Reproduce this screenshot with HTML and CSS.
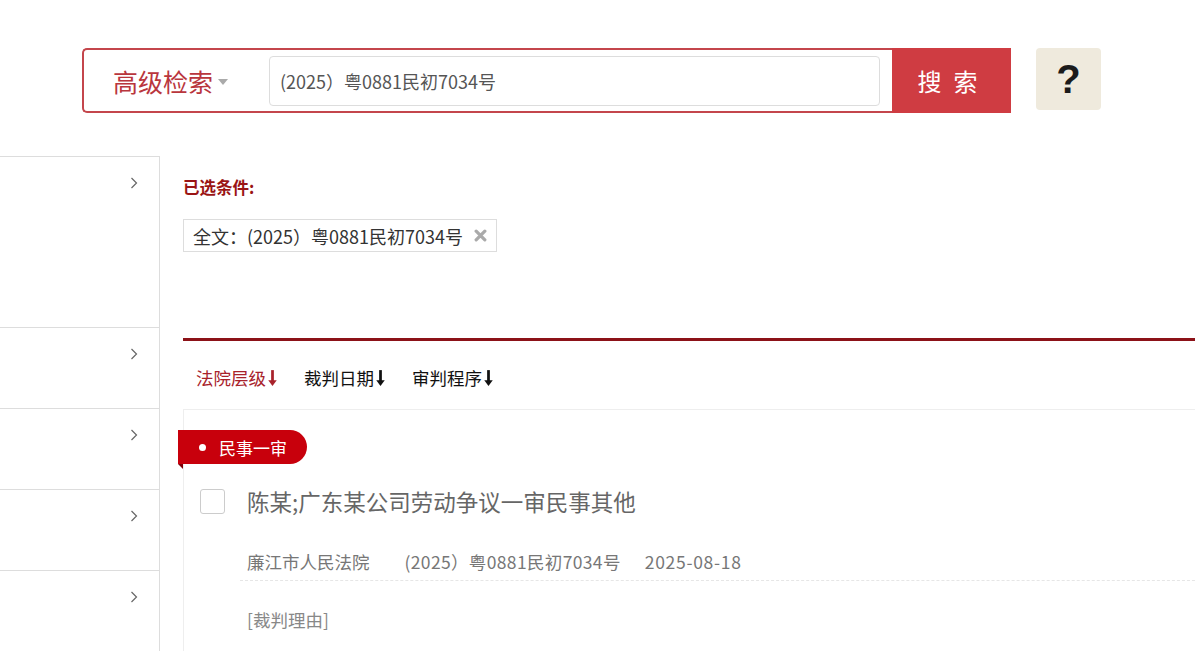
FILE: index.html
```html
<!DOCTYPE html>
<html lang="zh-CN">

<head>
  <meta charset="utf-8">
  <title>裁判文书检索</title>
  <link rel="stylesheet" href="styles.css">
</head>

<body>
  <div id="top">
    <div id="search">
      <div id="search_box">
        <div id="adv">高级检索<span class="caret"></span></div>
        <input id="q" type="text" value="(2025）粤0881民初7034号">
      </div>
      <button id="go">搜索</button>
    </div>
    <button id="help">?</button>
  </div>

  <div id="page">
    <div id="side">
      <div class="group tall"><svg class="chev" viewBox="0 0 8 12"><polyline points="1.5,1 6.5,6 1.5,11"/></svg></div>
      <div class="group"><svg class="chev" viewBox="0 0 8 12"><polyline points="1.5,1 6.5,6 1.5,11"/></svg></div>
      <div class="group"><svg class="chev" viewBox="0 0 8 12"><polyline points="1.5,1 6.5,6 1.5,11"/></svg></div>
      <div class="group"><svg class="chev" viewBox="0 0 8 12"><polyline points="1.5,1 6.5,6 1.5,11"/></svg></div>
      <div class="group"><svg class="chev" viewBox="0 0 8 12"><polyline points="1.5,1 6.5,6 1.5,11"/></svg></div>
    </div>

    <div id="main">
      <div id="chosen_label">已选条件:</div>
      <div id="chosen">
        <span class="cond">全文：(2025）粤0881民初7034号
          <svg class="x" viewBox="0 0 12 12"><path d="M2 2L10 10M10 2L2 10"/></svg>
        </span>
      </div>

      <div id="sorts">
        <span class="sort on">法院层级<svg class="arr" viewBox="0 0 10 18"><path d="M5 2V13"/><path class="head" d="M1 11.5L9 11.5L5 17Z"/></svg></span>
        <span class="sort">裁判日期<svg class="arr" viewBox="0 0 10 18"><path d="M5 2V13"/><path class="head" d="M1 11.5L9 11.5L5 17Z"/></svg></span>
        <span class="sort">审判程序<svg class="arr" viewBox="0 0 10 18"><path d="M5 2V13"/><path class="head" d="M1 11.5L9 11.5L5 17Z"/></svg></span>
      </div>

      <div class="card">
        <div class="ribbon"><span class="dot"></span>民事一审</div>
        <div class="head_row">
          <span class="check"></span>
          <a class="title" href="#">陈某;广东某公司劳动争议一审民事其他</a>
        </div>
        <div class="meta">
          <span class="court">廉江市人民法院</span>
          <span class="no">(2025）粤0881民初7034号</span>
          <span class="date">2025-08-18</span>
        </div>
        <div class="reason">[裁判理由]</div>
      </div>
    </div>
  </div>
</body>

</html>
```

FILE: styles.css
```css
* {
  box-sizing: border-box;
  margin: 0;
  padding: 0
}

html,
body {
  height: 100%
}

body {
  font-family: 'Microsoft YaHei', 'Noto Sans CJK SC', sans-serif;
  color: #333;
  background: #fff;
  overflow: hidden
}

button,
input {
  font: inherit;
  border: none;
  background: none
}

/* search bar */

#top {
  display: flex;
  align-items: flex-start;
  padding: 48px 0 0 82px
}

#search {
  display: flex;
  height: 65px
}

#search_box {
  width: 810px;
  display: flex;
  align-items: center;
  border: 2px solid #c4464c;
  border-right: none;
  border-radius: 5px 0 0 5px
}

#adv {
  width: 185px;
  padding-left: 29px;
  font-size: 25px;
  color: #b9363d;
  display: flex;
  align-items: center
}

.caret {
  display: inline-block;
  margin-left: 5px;
  margin-top: 3px;
  border-left: 5px solid transparent;
  border-right: 5px solid transparent;
  border-top: 6px solid #aaa
}

#q {
  width: 611px;
  height: 50px;
  border: 1px solid #ddd;
  border-radius: 4px;
  padding: 0 10px;
  font-size: 18px;
  color: #555;
  outline: none
}

#go {
  width: 119px;
  height: 65px;
  background: #cf3c42;
  color: #fff;
  font-size: 24px;
  letter-spacing: 12px;
  padding-left: 4px;
  cursor: pointer
}

#help {
  margin-left: 25px;
  width: 65px;
  height: 62px;
  border-radius: 4px;
  background: #efeadd;
  font-family: 'Liberation Sans', Arial, sans-serif;
  font-weight: bold;
  font-size: 40px;
  color: #1b1b1b;
  cursor: pointer
}

/* page */

#page {
  display: flex;
  margin-top: 43px;
  height: 600px
}

#side {
  width: 160px;
  flex-shrink: 0;
  border-top: 1px solid #ddd;
  border-right: 1px solid #ddd
}

.group {
  height: 81px;
  border-bottom: 1px solid #ddd;
  padding: 20px 21px 0 0;
  display: flex;
  justify-content: flex-end;
  align-items: flex-start
}

.group.tall {
  height: 171px
}

.chev {
  width: 8px;
  height: 12px;
  fill: none;
  stroke: #666;
  stroke-width: 1.2
}

#main {
  flex: 1;
  padding-left: 23px;
  margin-right: -20px
}

#chosen_label {
  margin-top: 21px;
  font-size: 16.5px;
  font-weight: bold;
  color: #9a1414;
  line-height: 20px
}

#chosen {
  margin-top: 22px
}

.cond {
  display: inline-flex;
  align-items: center;
  height: 33px;
  padding: 0 9px 0 9px;
  border: 1px solid #ddd;
  font-size: 18px;
  color: #333
}

.x {
  width: 13px;
  height: 13px;
  margin-left: 11px;
  stroke: #aaa;
  stroke-width: 3;
  stroke-linecap: round
}

#sorts {
  margin-top: 86px;
  border-top: 3px solid #8c1218;
  display: flex;
  gap: 26px;
  padding: 24px 0 0 13px;
  height: 71px
}

.sort {
  display: flex;
  align-items: center;
  height: 24px;
  font-size: 17.5px;
  color: #111
}

.sort.on {
  color: #a8222b
}

.arr {
  width: 11px;
  height: 19px;
  margin-left: 1px;
  stroke: currentColor;
  stroke-width: 2.6;
  fill: none
}

.arr .head {
  fill: currentColor;
  stroke: none
}

.card {
  border-top: 1px solid #eee;
  border-left: 1px solid #eee;
  padding-top: 20px;
  height: 260px
}

.ribbon {
  position: relative;
  margin-left: -6px;
  width: 129px;
  height: 34px;
  background: #c8000c;
  border-radius: 0 17px 17px 0;
  color: #fff;
  font-size: 17px;
  display: flex;
  align-items: center;
  padding-left: 21px
}

.ribbon::after {
  content: '';
  position: absolute;
  left: 0;
  bottom: -5px;
  border-top: 5px solid #7d0008;
  border-left: 5px solid transparent
}

.dot {
  width: 7px;
  height: 7px;
  border-radius: 50%;
  background: #fff;
  margin-right: 13px
}

.head_row {
  display: flex;
  align-items: center;
  margin-top: 21px;
  padding-left: 16px
}

.check {
  width: 25px;
  height: 25px;
  border: 1px solid #ccc;
  border-radius: 3px
}

.title {
  margin-left: 22px;
  font-size: 22.5px;
  color: #666;
  text-decoration: none
}

.meta {
  margin: 32px 0 0 56px;
  padding: 0 0 6px 7px;
  border-bottom: 1px dashed #e6e6e6;
  font-size: 17.5px;
  color: #777;
  display: flex
}

.no {
  margin-left: 35px;
  letter-spacing: 0.35px
}

.date {
  margin-left: 24px;
  letter-spacing: 0.7px
}

.reason {
  margin: 26px 0 0 63px;
  font-size: 17.5px;
  color: #888
}
```
